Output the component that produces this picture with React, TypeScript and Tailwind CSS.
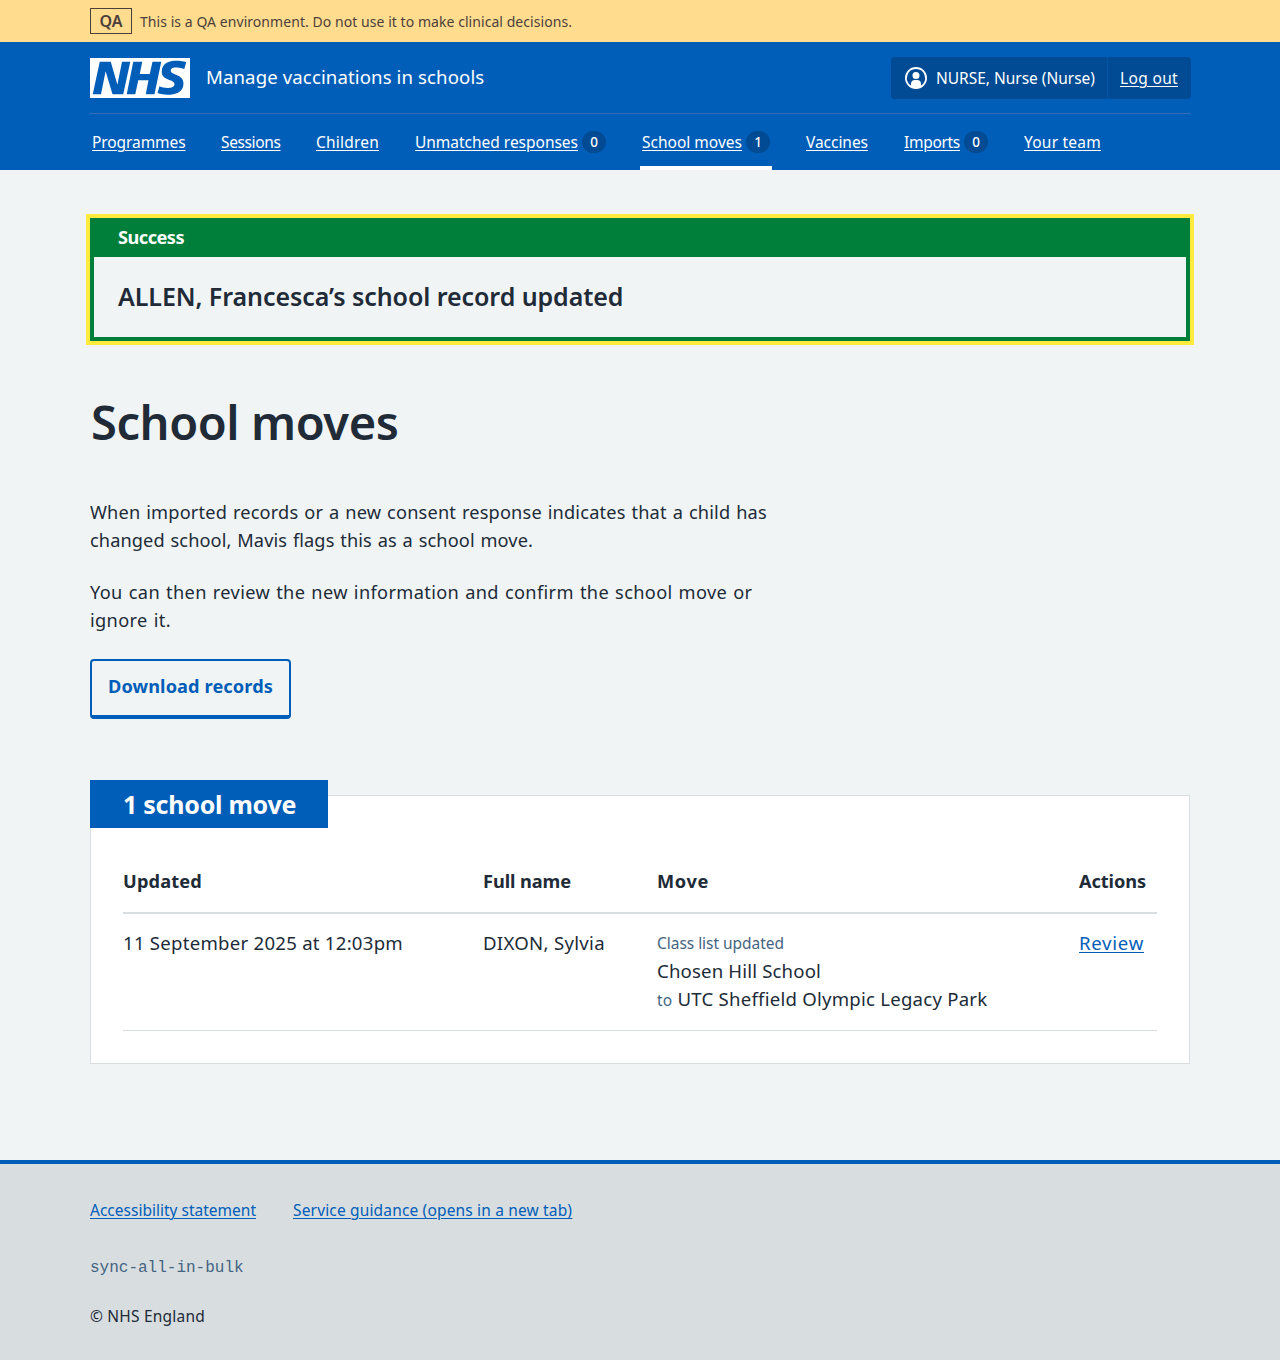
import React from "react";

type NavItem = { label: string; width: string; tracking: string; count?: number; current?: boolean };

const navItems: NavItem[] = [
  { label: "Programmes", width: "w-[97px]", tracking: "tracking-[-0.083px]" },
  { label: "Sessions", width: "w-[63px]", tracking: "tracking-[-0.373px]" },
  { label: "Children", width: "w-[67px]", tracking: "tracking-[0.209px]" },
  { label: "Unmatched responses", width: "w-[195px]", tracking: "tracking-[-0.019px]", count: 0 },
  { label: "School moves", width: "w-[132px]", tracking: "tracking-[0.007px]", count: 1, current: true },
  { label: "Vaccines", width: "w-[66px]", tracking: "tracking-[-0.039px]" },
  { label: "Imports", width: "w-[88px]", tracking: "tracking-[-0.299px]", count: 0 },
  { label: "Your team", width: "w-[81px]", tracking: "tracking-[0.231px]" },
];

function NhsLogo() {
  return (
    <svg className="h-10 w-[100px] shrink-0" viewBox="0 0 200 80" aria-label="NHS">
      <path
        fill="#fff"
        d="M200 0v80H0V0h200Zm-27.5 5.5c-14.5 0-29 5-29 22 0 10.2 7.7 13.5 14.7 16.3l.7.3c5.4 2 10.1 3.9 10.1 8.4 0 6.5-8.5 7.5-14 7.5s-12.5-1.5-16-3.5L135 70c5.5 2 13.5 3.5 20 3.5 15.5 0 32-4.5 32-22.5 0-19.5-25.5-16.5-25.5-25.5 0-5.5 5.5-6.5 12.5-6.5a35 35 0 0 1 14.5 3l4-13.5c-4.5-2-12-3-20-3Zm-131 2h-22l-14 65H22l9-45h.5l13.5 45h21.5l14-65H64l-9 45h-.5l-13-45Zm63 0h-18l-13 65h17l6-28H117l-5.5 28H129l13.5-65H125L119.5 32h-20l5-24.5Z"
      />
    </svg>
  );
}

function UserIcon() {
  return (
    <svg className="size-6 shrink-0" viewBox="0 0 24 24" fill="#fff" aria-hidden="true">
      <path d="M12 1a11 11 0 1 1 0 22 11 11 0 0 1 0-22Zm0 2a9 9 0 0 0-5 16.5V18a4 4 0 0 1 4-4h2a4 4 0 0 1 4 4v1.5A9 9 0 0 0 12 3Zm0 3a3.5 3.5 0 1 1-3.5 3.5A3.4 3.4 0 0 1 12 6Z" />
    </svg>
  );
}

function EnvironmentBanner() {
  return (
    <div className="h-[42px] bg-[#ffdc8e] text-[#4d3f3b]">
      <div className="mx-auto flex h-full w-[1100px] items-center gap-2">
        <strong className="flex h-[26px] w-[42px] items-center justify-center border border-[#4d3f3b] text-base leading-6 font-semibold">QA</strong>
        <span className="pt-0.5 text-sm leading-6 tracking-[0.055px]">This is a QA environment. Do not use it to make clinical decisions.</span>
      </div>
    </div>
  );
}

function Header() {
  return (
    <header className="h-32 bg-[#005eb8] text-white">
      <div className="mx-auto w-[1100px]">
        <div className="flex h-[72px] items-center border-b border-[#336fb9] pt-px">
          <NhsLogo />
          <span className="-mt-0.5 ml-4 text-[18.6px] leading-7 tracking-[0.11px]">Manage vaccinations in schools</span>
          <div className="-mr-px ml-auto flex h-[42px] w-[300px] rounded bg-[#004b93] text-[15.5px]">
            <div className="flex w-[217px] items-center gap-2 border-r border-[#0055a6] pl-[13px]">
              <UserIcon />
              <span className="pt-px whitespace-nowrap tracking-[-0.013px]">NURSE, Nurse (Nurse)</span>
            </div>
            <a href="#" className="flex items-center pt-px pl-3 tracking-[0.339px] underline decoration-1 underline-offset-2">Log out</a>
          </div>
        </div>
        <nav className="flex h-14 gap-8">
          {navItems.map((item) => (
            <a
              key={item.label}
              href="#"
              className={`flex h-14 items-center px-0.5 text-[15.5px] whitespace-nowrap ${item.width} ${item.tracking} ${item.current ? "shadow-[inset_0_-4px_0_#fff]" : ""}`}
            >
              <span className="leading-6 underline decoration-1 underline-offset-2">{item.label}</span>
              {item.count !== undefined && (
                <span className="ml-auto flex h-[22px] w-6 items-center justify-center rounded-full bg-[#004b93] pt-px text-[13.5px] font-medium tracking-normal">{item.count}</span>
              )}
            </a>
          ))}
        </nav>
      </div>
    </header>
  );
}

function SuccessBanner() {
  return (
    <section className="h-[123px] border-4 border-[#007f3b] shadow-[0_0_0_4px_#ffeb3b]">
      <h2 className="h-[35px] bg-[#007f3b] pl-6 text-[18.2px] leading-[31px] font-bold tracking-[-0.533px] text-white">Success</h2>
      <p className="pt-[23px] pl-6 text-[25px] leading-8 font-semibold tracking-[-0.07px]">ALLEN, Francesca’s school record updated</p>
    </section>
  );
}

function MovesCard() {
  return (
    <section className="mt-[61px]">
      <h2 className="relative z-10 h-12 w-[238px] bg-[#005eb8] pl-[33px] text-[25px] leading-[48px] font-bold tracking-[-0.25px] text-white">1 school move</h2>
      <div className="-mt-[33px] h-[269px] border border-[#d8dde0] bg-white px-8 pt-[71px]">
        <div className="grid h-[47px] grid-cols-[360px_174px_422px_1fr] border-b-2 border-[#d8dde0] text-[18.2px] leading-7 font-bold">
          <span className="tracking-[0.158px]">Updated</span>
          <span className="tracking-[-0.076px]">Full name</span>
          <span className="tracking-[0.648px]">Move</span>
          <span className="tracking-[-0.089px]">Actions</span>
        </div>
        <div className="grid h-[117px] grid-cols-[360px_174px_422px_1fr] border-b border-[#d8dde0] pt-[15px] text-[18.6px] leading-7">
          <span className="tracking-[0.25px]">11 September 2025 at 12:03pm</span>
          <span className="tracking-[0.3px]">DIXON, Sylvia</span>
          <div className="flex flex-col">
            <span className="text-[15.5px] leading-7 tracking-[-0.036px] text-[#456480]">Class list updated</span>
            <span className="tracking-[0.16px]">Chosen Hill School</span>
            <span className="tracking-[0.23px]">
              <span className="text-[15.5px] leading-7 text-[#456480]">to</span> UTC Sheffield Olympic Legacy Park
            </span>
          </div>
          <a href="#" className="tracking-[0.72px] text-[#005eb8] underline decoration-1 underline-offset-2">Review</a>
        </div>
      </div>
    </section>
  );
}

function Footer() {
  return (
    <footer className="h-[200px] border-t-4 border-[#005eb8] bg-[#d8dde0]">
      <div className="mx-auto w-[1100px] pt-[34px] text-[15.5px] leading-6">
        <div className="flex gap-[37px] text-[#005eb8] underline decoration-1 underline-offset-2">
          <a href="#" className="w-[166px] tracking-[0.004px] whitespace-nowrap">Accessibility statement</a>
          <a href="#" className="tracking-[0.16px]">Service guidance (opens in a new tab)</a>
        </div>
        <p className="mt-[34px] font-['Liberation_Mono',monospace] text-base leading-6 text-[#456480]">sync-all-in-bulk</p>
        <p className="mt-6 tracking-[0.209px]">© NHS England</p>
      </div>
    </footer>
  );
}

export default function App() {
  return (
    <div className="min-h-[1360px] bg-[#f0f4f5] font-['Noto_Sans',sans-serif] text-[#212b38]">
      <EnvironmentBanner />
      <Header />
      <main className="mx-auto h-[990px] w-[1100px] pt-12">
        <SuccessBanner />
        <h1 className="mt-[51px] pl-px text-[47px] leading-[60px] font-semibold tracking-[-0.42px]">School moves</h1>
        <div className="mt-[46px] text-[18.2px] leading-7 [word-spacing:1px] whitespace-nowrap">
          <p>
            <span className="tracking-[0.172px]">When imported records or a new consent response indicates that a child has</span>
            <br />
            <span className="tracking-[0.095px]">changed school, Mavis flags this as a school move.</span>
          </p>
          <p className="mt-6">
            <span className="tracking-[0.348px]">You can then review the new information and confirm the school move or</span>
            <br />
            <span className="tracking-[0.36px]">ignore it.</span>
          </p>
        </div>
        <button className="mt-[25px] block h-[60px] w-[201px] rounded border-2 border-b-4 border-[#005eb8] pb-1 text-[18.2px] leading-[50px] font-bold tracking-[0.101px] text-[#005eb8]">
          Download records
        </button>
        <MovesCard />
      </main>
      <Footer />
    </div>
  );
}
